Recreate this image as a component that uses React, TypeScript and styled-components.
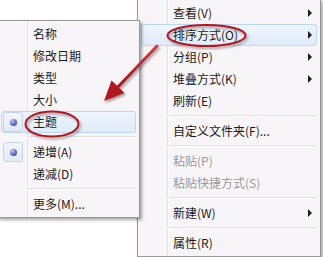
import styled, { createGlobalStyle } from 'styled-components';

const GlobalStyle = createGlobalStyle`
  html, body {
    margin: 0;
    padding: 0;
    background: #fff;
  }
`;

const Stage = styled.div`
  position: relative;
  width: 323px;
  height: 257px;
  overflow: hidden;
  background: #fff;
  font-family: "Noto Sans CJK SC", "Microsoft YaHei", sans-serif;
  font-size: 12px;
  color: #1b1b1b;
`;

const Menu = styled.div<{ $left: number; $top: number; $width: number; $z: number }>`
  position: absolute;
  left: ${p => p.$left}px;
  top: ${p => p.$top}px;
  width: ${p => p.$width}px;
  z-index: ${p => p.$z};
  box-sizing: border-box;
  padding: 2px;
  border: 1px solid #979797;
  background:
    linear-gradient(to right,
      transparent 29px, #e2e1e2 29px, #e2e1e2 30px,
      #fff 30px, #fff 31px, transparent 31px),
    #f8f5f8;
  box-shadow: 2px 2px 3px rgba(0, 0, 0, 0.35);
`;

const Item = styled.div<{ $active?: boolean; $disabled?: boolean }>`
  display: flex;
  align-items: center;
  box-sizing: border-box;
  height: 22px;
  margin: 0 1px;
  padding-right: 4px;
  border: 1px solid ${p => (p.$active ? '#bcd6f5' : 'transparent')};
  border-radius: 3px;
  background: ${p => (p.$active ? 'linear-gradient(#eef5fd, #e0ecfa)' : 'transparent')};
  color: ${p => (p.$disabled ? '#9a989a' : '#1b1b1b')};
  white-space: nowrap;
`;

const CheckCell = styled.div<{ $checked?: boolean }>`
  flex: none;
  display: flex;
  align-items: center;
  justify-content: center;
  box-sizing: border-box;
  width: 20px;
  height: 20px;
  margin: 0 10px 0 1px;
  border: 1px solid ${p => (p.$checked ? '#c4d3ea' : 'transparent')};
  border-radius: 3px;
  background: ${p => (p.$checked ? 'linear-gradient(#f1f5fb, #e2eaf6)' : 'transparent')};
`;

const Bullet = styled.span`
  width: 7px;
  height: 7px;
  border-radius: 50%;
  background: radial-gradient(circle at 35% 30%, #c4cbf6 0%, #6a74d6 45%, #2c3592 100%);
`;

const Label = styled.span`
  flex: 1;
  line-height: 20px;
`;

const SubArrow = styled.span`
  flex: none;
  width: 0;
  height: 0;
  border-left: 4px solid #1e1e1e;
  border-top: 4px solid transparent;
  border-bottom: 4px solid transparent;
`;

const Separator = styled.div`
  height: 1px;
  margin: 3px 1px 3px 27px;
  background: #e2e1e2;
  border-bottom: 1px solid #fff;
`;

const Notes = styled.svg`
  position: absolute;
  left: 0;
  top: 0;
  z-index: 5;
  pointer-events: none;
`;

type Entry =
  | 'sep'
  | { label: string; sub?: boolean; active?: boolean; checked?: boolean; disabled?: boolean };

const viewMenu: Entry[] = [
  { label: '查看(V)', sub: true },
  { label: '排序方式(O)', sub: true, active: true },
  { label: '分组(P)', sub: true },
  { label: '堆叠方式(K)', sub: true },
  { label: '刷新(E)' },
  'sep',
  { label: '自定义文件夹(F)...' },
  'sep',
  { label: '粘贴(P)', disabled: true },
  { label: '粘贴快捷方式(S)', disabled: true },
  'sep',
  { label: '新建(W)', sub: true },
  'sep',
  { label: '属性(R)' },
];

const sortMenu: Entry[] = [
  { label: '名称' },
  { label: '修改日期' },
  { label: '类型' },
  { label: '大小' },
  { label: '主题', active: true, checked: true },
  'sep',
  { label: '递增(A)', checked: true },
  { label: '递减(D)' },
  'sep',
  { label: '更多(M)...' },
];

function MenuList({ items }: { items: Entry[] }) {
  return (
    <>
      {items.map((it, i) =>
        it === 'sep' ? (
          <Separator key={i} />
        ) : (
          <Item key={i} $active={it.active} $disabled={it.disabled}>
            <CheckCell $checked={it.checked}>{it.checked && <Bullet />}</CheckCell>
            <Label>{it.label}</Label>
            {it.sub && <SubArrow />}
          </Item>
        )
      )}
    </>
  );
}

export default function App() {
  return (
    <Stage>
      <GlobalStyle />
      <Menu $left={137} $top={-1} $width={184} $z={1}>
        <MenuList items={viewMenu} />
      </Menu>
      <Menu $left={-3} $top={20} $width={143} $z={2}>
        <MenuList items={sortMenu} />
      </Menu>
      <Notes width="323" height="257" viewBox="0 0 323 257">
        <defs>
          <filter id="shade" x="-20%" y="-20%" width="140%" height="160%">
            <feDropShadow dx="1.5" dy="2" stdDeviation="1.2" floodColor="#000" floodOpacity="0.35" />
          </filter>
          <linearGradient id="arrowRed" x1="1" y1="0" x2="0" y2="1">
            <stop offset="0" stopColor="#d7383a" />
            <stop offset="1" stopColor="#a3121a" />
          </linearGradient>
        </defs>
        <g filter="url(#shade)" fill="none" stroke="#b3141c" strokeWidth="2">
          <ellipse cx="52" cy="124" rx="26.5" ry="12.5" />
          <ellipse cx="206.5" cy="35.5" rx="39" ry="10.5" />
        </g>
        <g filter="url(#shade)">
          <line x1="157" y1="46" x2="117" y2="88" stroke="url(#arrowRed)" strokeWidth="3" strokeLinecap="round" />
          <polygon points="104,101 111.5,80.5 124.5,93" fill="#b3141c" />
        </g>
      </Notes>
    </Stage>
  );
}
